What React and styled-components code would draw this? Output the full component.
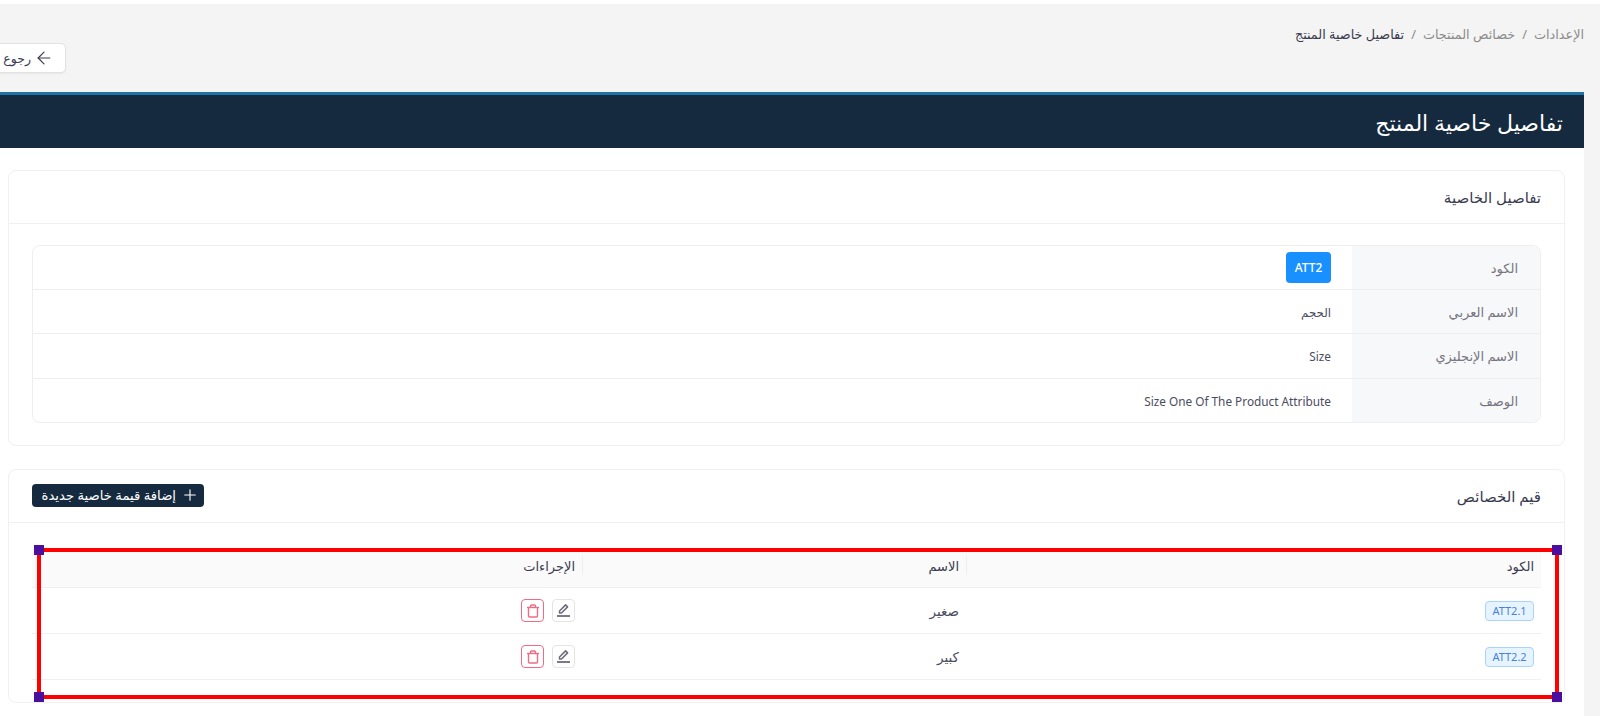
import React from 'react'
import styled, { createGlobalStyle } from 'styled-components'
import { ArrowLeft, Plus } from 'lucide-react'

const details = [
  { label: 'الكود', badge: 'ATT2' },
  { label: 'الاسم العربي', value: 'الحجم' },
  { label: 'الاسم الإنجليزي', value: 'Size' },
  { label: 'الوصف', value: 'Size One Of The Product Attribute' },
]

const values = [
  { code: 'ATT2.1', name: 'صغير' },
  { code: 'ATT2.2', name: 'كبير' },
]

function EditIcon() {
  return (
    <svg width="15" height="15" viewBox="0 0 15 15" fill="none" stroke="currentColor">
      <path d="M3.5 10 V8 L9.6 1.9 L11.6 3.9 L5.5 10 Z" strokeWidth="1.5" strokeLinejoin="round" />
      <path d="M1 13 H14" strokeWidth="1.8" />
    </svg>
  )
}

function TrashIcon() {
  return (
    <svg width="14" height="14" viewBox="0 0 14 14" fill="none" stroke="currentColor" strokeWidth="1.4">
      <path d="M1 3.5H13" />
      <path d="M2.5 3.5V12a1 1 0 0 0 1 1h7a1 1 0 0 0 1-1V3.5" />
      <path d="M4.5 3.5V2a1 1 0 0 1 1-1h3a1 1 0 0 1 1 1v1.5" />
    </svg>
  )
}

export default function App() {
  return (
    <Page dir="rtl">
      <GlobalStyle />
      <Main>
        <TopBar>
          <Breadcrumb>
            <span>الإعدادات</span>
            <span>/</span>
            <span>خصائص المنتجات</span>
            <span>/</span>
            <Current>تفاصيل خاصية المنتج</Current>
          </Breadcrumb>
          <BackRow>
            <BackButton>
              <ArrowLeft size={20} strokeWidth={1.4} />
              رجوع
            </BackButton>
          </BackRow>
        </TopBar>
        <Banner>
          <h1>تفاصيل خاصية المنتج</h1>
        </Banner>
        <Content>
          <Card>
            <CardHead>
              <CardTitle>تفاصيل الخاصية</CardTitle>
            </CardHead>
            <CardBody>
              <DetailTable>
                {details.map((row) => (
                  <DetailRow key={row.label}>
                    <DetailLabel>{row.label}</DetailLabel>
                    <DetailValue>
                      {row.badge ? <SolidBadge>{row.badge}</SolidBadge> : row.value}
                    </DetailValue>
                  </DetailRow>
                ))}
              </DetailTable>
            </CardBody>
          </Card>
          <Card>
            <CardHead>
              <CardTitle>قيم الخصائص</CardTitle>
              <AddButton>
                <Plus size={18} strokeWidth={1.5} />
                إضافة قيمة خاصية جديدة
              </AddButton>
            </CardHead>
            <TableBody>
              <HeadRow>
                <HeadCell>الكود</HeadCell>
                <HeadCell>الاسم</HeadCell>
                <HeadCell>الإجراءات</HeadCell>
              </HeadRow>
              {values.map((row) => (
                <ValueRow key={row.code}>
                  <Cell>
                    <CodeTag>{row.code}</CodeTag>
                  </Cell>
                  <Cell>{row.name}</Cell>
                  <Cell>
                    <Actions>
                      <IconButton>
                        <EditIcon />
                      </IconButton>
                      <IconButton $danger>
                        <TrashIcon />
                      </IconButton>
                    </Actions>
                  </Cell>
                </ValueRow>
              ))}
            </TableBody>
          </Card>
        </Content>
      </Main>
      <Selection>
        <Handle $y="top" $x="left" />
        <Handle $y="top" $x="right" />
        <Handle $y="bottom" $x="left" />
        <Handle $y="bottom" $x="right" />
      </Selection>
    </Page>
  )
}

const GlobalStyle = createGlobalStyle`
  html, body { margin: 0; padding: 0; height: 100%; overflow: hidden; }
  body { font-family: "Noto Sans", "DejaVu Sans", sans-serif; color: #3a3b4f; }
  * { box-sizing: border-box; }
`

const Page = styled.div`
  position: relative;
  width: 1600px;
  height: 716px;
  overflow: hidden;
  padding-right: 16px;
  background: #f4f4f4;
  border-top: 4px solid #fff;
`

const Main = styled.div`
  width: 1584px;
`

const TopBar = styled.div`
  height: 88px;
  padding-top: 21px;
`

const Breadcrumb = styled.div`
  display: flex;
  align-items: center;
  gap: 7px;
  height: 18px;
  font-size: 12.8px;
  color: #8c8c8c;
`

const Current = styled.span`
  color: #3a3b4f;
  font-weight: 500;
`

const BackRow = styled.div`
  display: flex;
  justify-content: flex-end;
`

const BackButton = styled.button`
  display: flex;
  align-items: center;
  gap: 3px;
  height: 30px;
  margin-left: -10px;
  padding: 0 11px 0 0;
  width: 76px;
  font: inherit;
  font-size: 12.5px;
  color: #3a3b4f;
  background: #fff;
  border: 1px solid #e2e2e2;
  border-radius: 5px;
  box-shadow: 0 1px 2px rgba(0, 0, 0, 0.05);
`

const Banner = styled.div`
  display: flex;
  align-items: center;
  height: 56px;
  padding: 0 21px;
  background: #152a3f;
  border-top: 3px solid #1a75a5;
  h1 {
    margin: 0;
    font-size: 22px;
    font-weight: 400;
    color: #fff;
  }
`

const Content = styled.div`
  display: flex;
  flex-direction: column;
  gap: 23px;
  padding: 22px 19px 0 8px;
  background: #fff;
  height: 600px;
`

const Card = styled.section`
  background: #fff;
  border: 1px solid #f0f0f0;
  border-radius: 8px;
`

const CardHead = styled.div`
  display: flex;
  align-items: center;
  justify-content: space-between;
  height: 53px;
  padding: 0 23px;
  border-bottom: 1px solid #f0f0f0;
`

const CardTitle = styled.div`
  font-size: 15px;
  font-weight: 400;
  color: #3a3b4f;
`

const CardBody = styled.div`
  padding: 21px 23px 22px;
`

const DetailTable = styled.div`
  border: 1px solid #eeeeee;
  border-radius: 8px;
  overflow: hidden;
`

const DetailRow = styled.div`
  display: grid;
  grid-template-columns: 188px 1fr;
  height: 44px;
  &:first-child {
    height: 43px;
  }
  &:nth-child(3) {
    height: 45px;
  }
  & + & {
    border-top: 1px solid #eeeeee;
  }
`

const DetailLabel = styled.div`
  display: flex;
  align-items: center;
  padding: 0 22px;
  font-size: 13px;
  color: #75757f;
  background: #f7f8fa;
`

const DetailValue = styled.div`
  display: flex;
  align-items: center;
  padding: 0 21px;
  font-size: 11.8px;
  color: #4b4c5f;
`

const SolidBadge = styled.span`
  display: flex;
  align-items: center;
  justify-content: center;
  width: 45px;
  height: 31px;
  font-size: 12px;
  font-weight: 500;
  color: #fff;
  background: #1890ff;
  border-radius: 4px;
`

const AddButton = styled.button`
  display: flex;
  align-items: center;
  gap: 5px;
  height: 23px;
  width: 172px;
  margin-bottom: 2px;
  padding: 0 5px 0 0;
  font: inherit;
  font-size: 13.2px;
  font-weight: 500;
  white-space: nowrap;
  color: #fff;
  background: #152a3f;
  border: 0;
  border-radius: 4px;
`

const TableBody = styled.div`
  padding: 26px 23px 22px;
`

const columns = `
  display: grid;
  grid-template-columns: 575px 384px 1fr;
`

const HeadRow = styled.div`
  ${columns}
  height: 39px;
  background: #fafafa;
  border-bottom: 1px solid #f0f0f0;
`

const HeadCell = styled.div`
  position: relative;
  display: flex;
  align-items: center;
  padding: 0 7px 4px;
  font-size: 13px;
  font-weight: 500;
  color: #3a3b4f;
  &:not(:last-child)::after {
    content: '';
    position: absolute;
    left: 0;
    top: 6px;
    height: 20px;
    width: 1px;
    background: #efefef;
  }
`

const ValueRow = styled.div`
  ${columns}
  height: 46px;
  border-bottom: 1px solid #f0f0f0;
`

const Cell = styled.div`
  display: flex;
  align-items: center;
  padding: 0 7px;
  font-size: 13.5px;
  color: #4b4c5f;
`

const CodeTag = styled.span`
  width: 49px;
  height: 20px;
  line-height: 18px;
  text-align: center;
  font-size: 11px;
  color: #4a7fe0;
  background: #e6f4ff;
  border: 1px solid #a9d3fb;
  border-radius: 4px;
`

const Actions = styled.div`
  display: flex;
  gap: 8px;
`

const IconButton = styled.button`
  display: flex;
  align-items: center;
  justify-content: center;
  width: 23px;
  height: 23px;
  padding: 0;
  background: #fff;
  color: ${(p) => (p.$danger ? '#ee6d85' : '#6b6b7c')};
  border: 1px solid ${(p) => (p.$danger ? '#ee6d85' : '#e4e4e4')};
  border-radius: 4px;
`

// review marker drawn over the table in the screenshot
const Selection = styled.div`
  position: absolute;
  left: 37px;
  top: 544px;
  width: 1522px;
  height: 151px;
  border: 4px solid #ff0000;
  pointer-events: none;
`

const Handle = styled.i`
  position: absolute;
  width: 10px;
  height: 10px;
  background: #4b0fa0;
  ${(p) => p.$y}: -7px;
  ${(p) => p.$x}: -7px;
`
